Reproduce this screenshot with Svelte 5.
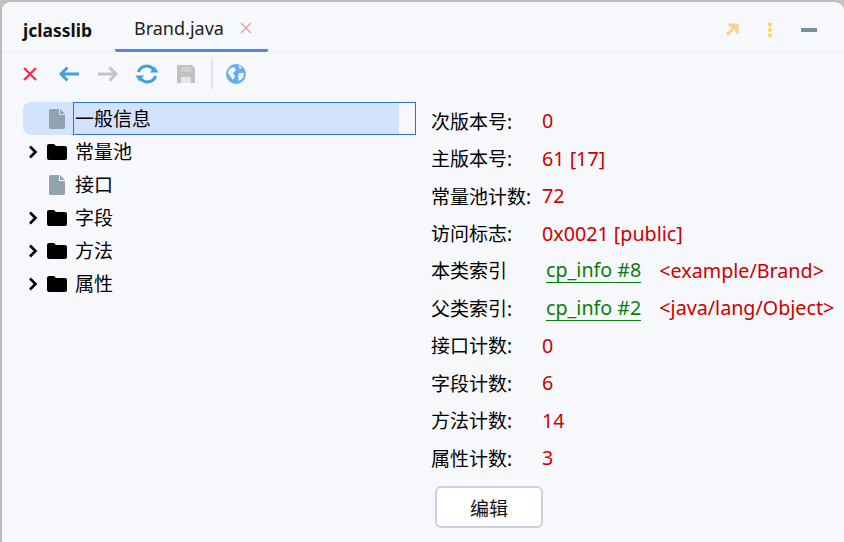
<script lang="ts">
    const tree = [
        { label: "一般信息", folder: false, selected: true },
        { label: "常量池", folder: true },
        { label: "接口", folder: false },
        { label: "字段", folder: true },
        { label: "方法", folder: true },
        { label: "属性", folder: true },
    ];

    const info = [
        { name: "次版本号:", value: "0" },
        { name: "主版本号:", value: "61 [17]" },
        { name: "常量池计数:", value: "72" },
        { name: "访问标志:", value: "0x0021 [public]" },
        { name: "本类索引", link: "cp_info #8", value: "<example/Brand>" },
        { name: "父类索引:", link: "cp_info #2", value: "<java/lang/Object>" },
        { name: "接口计数:", value: "0" },
        { name: "字段计数:", value: "6" },
        { name: "方法计数:", value: "14" },
        { name: "属性计数:", value: "3" },
    ];
</script>

<div class="window">
    <header class="tabbar">
        <span class="brand">jclasslib</span>
        <div class="tab">
            <span>Brand.java</span>
            <svg class="tab-close" viewBox="0 0 12 12" width="12" height="12">
                <path d="M1 1 L11 11 M11 1 L1 11" stroke="#eba5a5" stroke-width="1.5" fill="none" />
            </svg>
        </div>
        <div class="window-actions">
            <svg viewBox="0 0 14 14" width="14" height="14">
                <path d="M2.5 0.5 H13.5 V11.5 L10 9 V6 L3.4 13 L0.8 10.4 L7.6 4 H4.8 Z" fill="#ffcf94" />
            </svg>
            <svg viewBox="0 0 4 16" width="4" height="16">
                <circle cx="2" cy="2.4" r="2" fill="#ffd83d" />
                <circle cx="2" cy="8" r="2" fill="#ffd83d" />
                <circle cx="2" cy="13.6" r="2" fill="#ffd83d" />
            </svg>
            <span class="minimize"></span>
        </div>
    </header>

    <div class="toolbar">
        <span class="tool">
            <svg viewBox="0 0 16 16" width="16" height="16">
                <path d="M2 2 L14 14 M14 2 L2 14" stroke="#fa2c55" stroke-width="2.4" fill="none" />
            </svg>
        </span>
        <span class="tool">
            <svg viewBox="0 0 22 16" width="22" height="16">
                <path d="M21 8 H3 M9.5 1.5 L3 8 L9.5 14.5" stroke="#42a0dc" stroke-width="3" fill="none" />
            </svg>
        </span>
        <span class="tool">
            <svg viewBox="0 0 22 16" width="22" height="16">
                <path d="M1 8 H19 M12.5 1.5 L19 8 L12.5 14.5" stroke="#c4c4c4" stroke-width="3" fill="none" />
            </svg>
        </span>
        <span class="tool">
            <svg viewBox="0 0 24 20" width="24" height="20">
                <path d="M3.4 8 A8.6 8.6 0 0 1 18.5 5.6" stroke="#42a0dc" stroke-width="3" fill="none" />
                <path d="M15 8.4 H23.5 L19.6 2.4 Z" fill="#42a0dc" />
                <path d="M20.6 12 A8.6 8.6 0 0 1 5.5 14.4" stroke="#42a0dc" stroke-width="3" fill="none" />
                <path d="M9 11.6 H0.5 L4.4 17.6 Z" fill="#42a0dc" />
            </svg>
        </span>
        <span class="tool">
            <svg viewBox="0 0 18 18" width="18" height="18">
                <path d="M0 0 H15 L18 3 V18 H0 Z" fill="#c1c1c1" />
                <path d="M4 2 H14 V7 H4 Z" fill="#cfcfcf" />
                <path d="M4 12 H14 V18 H4 Z" fill="#e6e6e6" />
            </svg>
        </span>
        <span class="separator"></span>
        <span class="tool">
            <svg viewBox="0 0 20 20" width="20" height="20">
                <circle cx="10" cy="10" r="10" fill="#64aef0" />
                <path d="M3 5 L8 3 L10 6 L7 9 L9 12 L7 16 L4 12 L2 9 Z M13 9 L18 9 L17 14 L13 17 L12 13 Z M12 1.5 L16 3 L14 5 Z" fill="#f0f6fd" />
            </svg>
        </span>
    </div>

    <main class="content">
        <ul class="tree">
            {#each tree as node}
                <li class="node" class:selected={node.selected}>
                    <span class="chevron">
                        {#if node.folder}
                            <svg viewBox="0 0 10 14" width="10" height="14">
                                <path d="M2 1.5 L7.5 7 L2 12.5" stroke="#000" stroke-width="2.6" fill="none" />
                            </svg>
                        {/if}
                    </span>
                    <span class="node-icon">
                        {#if node.folder}
                            <svg viewBox="0 0 20 16" width="20" height="16">
                                <path d="M0 2 Q0 0 2 0 H7 L9 2 H18 Q20 2 20 4 V14 Q20 16 18 16 H2 Q0 16 0 14 Z" fill="#000" />
                            </svg>
                        {:else}
                            <svg viewBox="0 0 16 20" width="16" height="20">
                                <path d="M1.5 0 H10 V6 H16 V18.5 Q16 20 14.5 20 H1.5 Q0 20 0 18.5 V1.5 Q0 0 1.5 0 Z M11 0 L16 5 H11 Z" fill="#90a4ae" />
                            </svg>
                        {/if}
                    </span>
                    <span class="node-label">{node.label}</span>
                </li>
            {/each}
        </ul>

        <section class="details">
            <div class="rows">
                {#each info as row}
                    <div class="row">
                        <span class="name">{row.name}</span>
                        {#if row.link}
                            <a class="link" href="#top">{row.link}</a>
                        {/if}
                        <span class="value">{row.value}</span>
                    </div>
                {/each}
            </div>
            <button class="edit">编辑</button>
        </section>
    </main>
</div>

<style>
    :global(body) {
        background: #c4c4c4;
    }

    .window {
        width: 844px;
        height: 542px;
        box-sizing: border-box;
        border-top: 2px solid #bcbcbc;
        border-left: 2px solid #bcbcbc;
        border-top-left-radius: 10px;
        border-top-right-radius: 10px;
        background: #f7f8fb;
        font-family: "Noto Sans", "Noto Sans CJK SC", sans-serif;
        font-size: 19px;
        color: #000;
        overflow: hidden;
    }

    .tabbar {
        height: 50px;
        box-sizing: border-box;
        display: flex;
        align-items: center;
        padding: 6px 0 0 21px;
        border-bottom: 1px solid #ebedf0;
    }

    .brand {
        font-weight: 700;
        font-size: 17.5px;
        width: 92px;
        color: #111;
    }

    .tab {
        width: 153px;
        height: 44px;
        box-sizing: border-box;
        display: flex;
        align-items: center;
        gap: 16px;
        padding-left: 19px;
        font-size: 18px;
        border-bottom: 3px solid #4f86e6;
        border-radius: 0 0 2px 2px;
        color: #222;
    }

    .window-actions {
        margin-left: auto;
        width: 119px;
        display: flex;
        align-items: center;
        padding-right: 27px;
        box-sizing: border-box;
        justify-content: space-between;
    }

    .minimize {
        width: 16px;
        height: 4px;
        background: #78909c;
    }

    .toolbar {
        height: 44px;
        box-sizing: border-box;
        display: flex;
        align-items: center;
        padding-left: 8.5px;
    }

    .tool {
        width: 39px;
        display: flex;
        justify-content: center;
        align-items: center;
    }

    .separator {
        width: 2px;
        height: 30px;
        background: #e2e3e6;
        margin: 0 4px 0 5px;
    }

    .content {
        display: flex;
        padding-top: 6px;
    }

    .tree {
        list-style: none;
        margin: 0;
        padding: 0 0 0 21px;
        width: 376px;
        flex-shrink: 0;
    }

    .node {
        height: 33px;
        display: flex;
        align-items: center;
    }

    .node.selected {
        background: #d3e2fd;
        border-radius: 8px 0 0 8px;
    }

    .chevron {
        width: 20px;
        flex-shrink: 0;
        display: flex;
        justify-content: center;
    }

    .node-icon {
        width: 28px;
        flex-shrink: 0;
        display: flex;
        justify-content: center;
    }

    .node-label {
        margin-left: 2px;
        padding-left: 2px;
        line-height: 32px;
        white-space: nowrap;
    }

    .selected .node-label {
        flex-shrink: 0;
        width: 343px;
        height: 33px;
        box-sizing: border-box;
        padding-left: 1px;
        border: 1px solid #2f6fd0;
    }

    .details {
        margin-left: 32px;
    }

    .row {
        height: 37.45px;
        display: flex;
        align-items: center;
        white-space: nowrap;
    }

    .name {
        width: 111px;
        flex-shrink: 0;
        color: #000;
    }

    .link {
        display: block;
        box-sizing: border-box;
        height: 25px;
        margin-top: 1px;
        font-size: 19.7px;
        color: #0a7d0a;
        margin-left: 4px;
        margin-right: 18px;
        text-decoration: none;
        border-bottom: 1px solid #0a7d0a;
        line-height: 23px;
    }

    .value {
        font-size: 19.7px;
        color: #cc0000;
    }

    .edit {
        display: block;
        margin: 10px 0 0 4px;
        padding-top: 2px;
        width: 108px;
        height: 42px;
        background: #fff;
        border: 2px solid #ccd0e0;
        border-radius: 6px;
        font: inherit;
        color: #111;
    }
</style>
